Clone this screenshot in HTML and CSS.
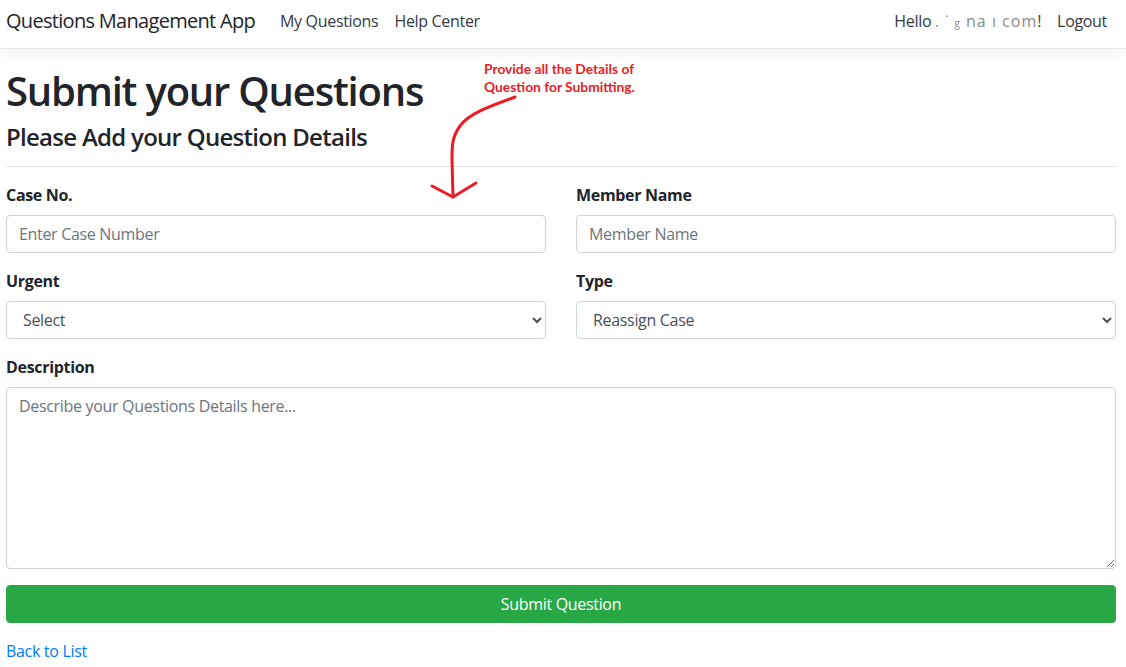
FILE: index.html
```html
<!DOCTYPE html>
<html lang="en">
<head>
<meta charset="utf-8">
<title>Submit your Questions - Questions Management App</title>
<link rel="stylesheet" href="styles.css">
</head>
<body>
<header class="navbar">
  <a class="brand" href="#">Questions Management App</a>
  <nav class="nav-left">
    <a class="nav-link" href="#">My Questions</a>
    <a class="nav-link" href="#">Help Center</a>
  </nav>
  <div class="nav-right">
    <span class="nav-link">Hello <span class="mask">. &#729; <span class="tiny">g</span> na &#305; com</span>!</span>
    <a class="nav-link" href="#">Logout</a>
  </div>
</header>

<main class="page">
  <h1 class="title">Submit your Questions</h1>
  <h4 class="subtitle">Please Add your Question Details</h4>
  <hr class="divider">

  <form class="form">
    <div class="row">
      <div class="group">
        <label class="label" for="caseNo">Case No.</label>
        <input class="control" id="caseNo" type="text" placeholder="Enter Case Number">
      </div>
      <div class="group">
        <label class="label" for="member">Member Name</label>
        <input class="control" id="member" type="text" placeholder="Member Name">
      </div>
    </div>
    <div class="row">
      <div class="group">
        <label class="label" for="urgent">Urgent</label>
        <select class="control" id="urgent">
          <option>Select</option>
          <option>Yes</option>
          <option>No</option>
        </select>
      </div>
      <div class="group">
        <label class="label" for="type">Type</label>
        <select class="control" id="type">
          <option>Reassign Case</option>
          <option>Other</option>
        </select>
      </div>
    </div>
    <div class="group">
      <label class="label" for="desc">Description</label>
      <textarea class="control area" id="desc" placeholder="Describe your Questions Details here..."></textarea>
    </div>
    <div class="group">
      <button class="btn-submit" type="button">Submit Question</button>
    </div>
  </form>

  <a class="back" href="#">Back to List</a>
</main>

<div class="annotation">
  <p class="note">Provide all the Details of<br>Question for Submitting.</p>
  <svg class="arrow" width="100" height="115" viewBox="0 0 100 115" aria-hidden="true">
    <path d="M90 7 C65 16,43 24,35 36 C27 47,27 55,27 70 L28 107" fill="none" stroke="#ec1c24" stroke-width="3" stroke-linecap="round"/>
    <path d="M7 96 L28 107 L51 93" fill="none" stroke="#ec1c24" stroke-width="3" stroke-linecap="round" stroke-linejoin="round"/>
  </svg>
</div>
</body>
</html>
```
FILE: styles.css
```css
* { box-sizing: border-box; }
html, body { margin: 0; }
body {
  font-family: "Open Sans", "Noto Sans", sans-serif;
  font-size: 16px;
  line-height: 1.5;
  letter-spacing: -0.02em;
  color: #212529;
  background: #fff;
}

.navbar {
  display: flex;
  align-items: center;
  height: 49px;
  padding: 0 11px 6px 6px;
  border-bottom: 1px solid #e5e5e5;
  box-shadow: 0 4px 12px rgba(0, 0, 0, 0.05);
  margin-bottom: 16px;
}
.brand {
  font-size: 20px;
  letter-spacing: -0.035em;
  color: #212529;
  text-decoration: none;
  margin-right: 17px;
  white-space: nowrap;
}
.nav-left, .nav-right { display: flex; align-items: center; }
.nav-right { margin-left: auto; }
.nav-link {
  padding: 0 8px;
  color: #343a40;
  text-decoration: none;
  white-space: nowrap;
}
.mask { color: #8a8a8a; letter-spacing: 1px; }
.tiny { font-size: 10px; }

.page { padding: 0 10px 0 6px; }
.title {
  font-size: 40px;
  font-weight: 600;
  line-height: 1.2;
  letter-spacing: -0.03em;
  margin: 0 0 8px;
  padding-top: 2px;
}
.subtitle {
  font-size: 24px;
  font-weight: 600;
  line-height: 1.2;
  letter-spacing: -0.03em;
  margin: 0 0 4px;
}
.divider {
  margin: 14px 0 16px;
  border: 0;
  border-top: 1px solid rgba(0, 0, 0, 0.1);
}

.row {
  display: grid;
  grid-template-columns: 1fr 1fr;
  column-gap: 30px;
}
.group { margin-bottom: 16px; }
.label {
  display: block;
  font-weight: 700;
  margin-bottom: 8px;
}
.control {
  display: block;
  width: 100%;
  height: 38px;
  padding: 6px 12px;
  font-family: inherit;
  font-size: 16px;
  line-height: 1.5;
  letter-spacing: -0.02em;
  color: #495057;
  background: #fff;
  border: 1px solid #ced4da;
  border-radius: 4px;
}
.control::placeholder { color: #6c757d; }
.area { height: 182px; resize: vertical; }

.btn-submit {
  display: block;
  width: 100%;
  height: 38px;
  font-family: inherit;
  font-size: 16px;
  letter-spacing: -0.02em;
  color: #fff;
  background: #28a745;
  border: 1px solid #28a745;
  border-radius: 4px;
}
.back { color: #007bff; text-decoration: none; }

.annotation {
  position: absolute;
  left: 425px;
  top: 60px;
}
.note {
  margin: 0 0 0 59px;
  font-family: Lato, "Liberation Sans", sans-serif;
  font-weight: 700;
  font-size: 13.8px;
  line-height: 18px;
  letter-spacing: 0;
  color: #ec1c24;
}
.arrow {
  position: absolute;
  left: 0;
  top: 30px;
}
```
